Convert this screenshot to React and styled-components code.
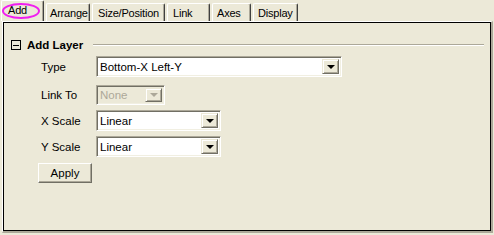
import styled, { createGlobalStyle } from "styled-components";

const GlobalStyle = createGlobalStyle`
  html, body {
    margin: 0;
    padding: 0;
    background: #ece9d8;
  }
  body {
    font-family: "Liberation Sans", Arial, sans-serif;
    font-size: 11px;
    color: #000;
  }
`;

const Window = styled.div`
  position: relative;
  width: 494px;
  height: 235px;
  background: #ece9d8;
  overflow: hidden;
`;

const TabStrip = styled.div`
  display: flex;
  align-items: flex-end;
  height: 21px;
  padding-left: 1px;
`;

const Tab = styled.div`
  box-sizing: border-box;
  width: ${(p) => p.$w}px;
  height: ${(p) => (p.$active ? 21 : 18)}px;
  margin-right: 2px;
  padding-left: ${(p) => p.$pad}px;
  display: flex;
  align-items: center;
  padding-bottom: ${(p) => (p.$active ? 3 : 0)}px;
  background: #ece9d8;
  border-top: 1px solid #fff;
  border-left: 1px solid #fff;
  border-right: 1px solid #404040;
  box-shadow: inset -1px 0 0 #aca899;
  border-radius: 2px 2px 0 0;
  font-size: 11px;
  letter-spacing: -0.2px;
  white-space: nowrap;
`;

const Circle = styled.div`
  position: absolute;
  left: 2px;
  top: 3px;
  width: 38px;
  height: 16px;
  border: 2px solid #f01ef0;
  border-radius: 50%;
  box-sizing: border-box;
`;

const Panel = styled.div`
  box-sizing: border-box;
  margin-left: 2px;
  width: 491px;
  height: 212px;
  border-top: 1px solid #fff;
  border-left: 1px solid #fff;
  border-right: 2px solid #aca899;
  border-bottom: 2px solid #aca899;
  box-shadow: inset 0 0 0 1px #000;
  padding: 18px 0 0 8px;
  display: flex;
  flex-direction: column;
`;

const GroupHeader = styled.div`
  display: flex;
  align-items: center;
  height: 10px;
  gap: 6px;
  margin-bottom: 6px;
`;

const Toggle = styled.div`
  box-sizing: border-box;
  width: 10px;
  height: 10px;
  border: 1px solid #000;
  display: flex;
  align-items: center;
  justify-content: center;
  &::after {
    content: "";
    width: 6px;
    height: 1px;
    background: #000;
  }
`;

const GroupTitle = styled.span`
  font-weight: bold;
  font-size: 11.5px;
`;

const Rule = styled.div`
  width: 391px;
  height: 1px;
  background: #aca899;
  border-bottom: 1px solid #fff;
  margin-left: 4px;
`;

const Row = styled.div`
  display: flex;
  align-items: center;
  padding-left: 30px;
  margin-top: ${(p) => p.$mt || 0}px;
`;

const Label = styled.span`
  width: 55px;
  font-size: 11.5px;
`;

const Combo = styled.div`
  box-sizing: border-box;
  width: ${(p) => p.$w}px;
  height: ${(p) => p.$h || 21}px;
  display: flex;
  align-items: stretch;
  background: ${(p) => (p.$disabled ? "#ece9d8" : "#fff")};
  border-top: 1px solid #aca899;
  border-left: 1px solid #aca899;
  border-right: 1px solid #fff;
  border-bottom: 1px solid #fff;
  box-shadow: inset 1px 1px 0 #716f64, inset -1px -1px 0 #f1efe2;
  padding: 2px;
`;

const ComboText = styled.div`
  flex: 1;
  display: flex;
  align-items: center;
  padding-left: 1px;
  font-size: 11.5px;
  color: ${(p) => (p.$disabled ? "#aca899" : "#000")};
`;

const DropButton = styled.div`
  box-sizing: border-box;
  width: 17px;
  background: #ece9d8;
  border-top: 1px solid #ece9d8;
  border-left: 1px solid #ece9d8;
  border-right: 1px solid #716f64;
  border-bottom: 1px solid #716f64;
  box-shadow: inset 1px 1px 0 #fff, inset -1px -1px 0 #aca899;
  display: flex;
  align-items: center;
  justify-content: center;
  &::after {
    content: "";
    width: 0;
    height: 0;
    margin-left: 1px;
    border-left: 4px solid transparent;
    border-right: 4px solid transparent;
    border-top: 4px solid ${(p) => (p.$disabled ? "#aca899" : "#000")};
  }
`;

const Button = styled.div`
  box-sizing: border-box;
  width: 54px;
  height: 20px;
  margin: 6px 0 0 27px;
  display: flex;
  align-items: center;
  justify-content: center;
  font-size: 11.5px;
  background: #ece9d8;
  border-top: 1px solid #fff;
  border-left: 1px solid #fff;
  border-right: 1px solid #716f64;
  border-bottom: 1px solid #716f64;
  box-shadow: inset -1px -1px 0 #aca899;
`;

const tabs = [
  { name: "Add", w: 43, pad: 6, active: true },
  { name: "Arrange", w: 44, pad: 3 },
  { name: "Size/Position", w: 73, pad: 5 },
  { name: "Link", w: 43, pad: 5 },
  { name: "Axes", w: 39, pad: 4 },
  { name: "Display", w: 45, pad: 4 },
];

const Select = ({ value, width, height, disabled }) => (
  <Combo $w={width} $h={height} $disabled={disabled}>
    <ComboText $disabled={disabled}>{value}</ComboText>
    <DropButton $disabled={disabled} />
  </Combo>
);

export default function App() {
  return (
    <>
      <GlobalStyle />
      <Window>
        <TabStrip>
          {tabs.map((t) => (
            <Tab key={t.name} $w={t.w} $pad={t.pad} $active={t.active}>
              {t.name}
            </Tab>
          ))}
        </TabStrip>
        <Circle />
        <Panel>
          <GroupHeader>
            <Toggle />
            <GroupTitle>Add Layer</GroupTitle>
            <Rule />
          </GroupHeader>
          <Row>
            <Label>Type</Label>
            <Select value="Bottom-X Left-Y" width={246} />
          </Row>
          <Row $mt={8}>
            <Label>Link To</Label>
            <Select value="None" width={69} height={20} disabled />
          </Row>
          <Row $mt={5}>
            <Label>X Scale</Label>
            <Select value="Linear" width={125} />
          </Row>
          <Row $mt={5}>
            <Label>Y Scale</Label>
            <Select value="Linear" width={125} />
          </Row>
          <Button>Apply</Button>
        </Panel>
      </Window>
    </>
  );
}
